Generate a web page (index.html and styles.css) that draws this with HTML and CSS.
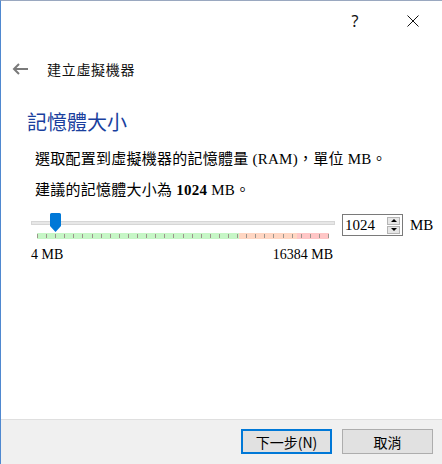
FILE: index.html
```html
<!DOCTYPE html>
<html lang="zh-Hant">
<head>
    <meta charset="UTF-8">
    <title>建立虛擬機器</title>
    <link rel="stylesheet" href="styles.css">
</head>
<body>
    <div class="window">
        <!-- Title bar -->
        <div class="titlebar">
            <span class="tb-btn">?</span>
            <span class="tb-btn">
                <svg width="12" height="12" viewBox="0 0 12 12"><path d="M0.5 0.5L11.5 11.5M11.5 0.5L0.5 11.5" stroke="#111" stroke-width="1" fill="none"/></svg>
            </span>
        </div>

        <!-- Wizard nav -->
        <div class="nav">
            <svg class="back" width="16" height="12" viewBox="0 0 16 12"><path d="M16 6H2M7 1L2 6l5 5" stroke="#7a7a7a" stroke-width="2" fill="none"/></svg>
            <span class="nav-title">建立虛擬機器</span>
        </div>

        <!-- Page -->
        <div class="page">
            <h1 class="page-title">記憶體大小</h1>
            <p class="desc">選取配置到虛擬機器的記憶體量 (RAM)，單位 MB。</p>
            <p class="desc">建議的記憶體大小為 <b>1024</b> MB。</p>

            <div class="mem-row">
                <div class="slider">
                    <div class="track"></div>
                    <svg class="thumb" width="11" height="19" viewBox="0 0 11 19"><path d="M1.5 0h8A1.5 1.5 0 0 1 11 1.5V13l-5.5 6L0 13V1.5A1.5 1.5 0 0 1 1.5 0z" fill="#0078d7"/></svg>
                    <div class="scale">
                        <i></i><i></i><i></i><i></i><i></i><i></i><i></i><i></i><i></i><i></i><i></i>
                        <i></i><i></i><i></i><i></i><i></i><i></i><i></i><i></i><i></i><i></i><i></i>
                        <i></i><i></i><i></i><i></i><i></i><i></i><i></i><i></i><i></i><i></i><i></i>
                    </div>
                </div>
                <div class="spin">
                    <span class="spin-value">1024</span>
                    <div class="spin-buttons">
                        <span class="spin-up"></span>
                        <span class="spin-down"></span>
                    </div>
                </div>
                <span class="unit">MB</span>
            </div>

            <div class="range-labels">
                <span>4 MB</span>
                <span>16384 MB</span>
            </div>
        </div>

        <!-- Buttons -->
        <div class="footer">
            <button class="btn btn-default">下一步(N)</button>
            <button class="btn">取消</button>
        </div>
    </div>
</body>
</html>
```

FILE: styles.css
```css
* {
    margin: 0;
    padding: 0;
    box-sizing: border-box;
}

body {
    font-family: "Liberation Serif", "Noto Sans CJK TC", serif;
    color: #000;
    background: #fff;
}

.window {
    height: 464px;
    display: flex;
    flex-direction: column;
    border-top: 1px solid #9aa8c0;
    border-left: 1px solid #4f88d0;
    background: #fff;
}

/* Title bar */
.titlebar {
    height: 40px;
    display: flex;
    justify-content: flex-end;
}

.tb-btn {
    width: 58px;
    display: flex;
    align-items: center;
    justify-content: center;
    font-family: "Noto Sans", sans-serif;
    font-size: 16px;
    color: #111;
}

/* Wizard nav */
.nav {
    height: 56px;
    display: flex;
    align-items: center;
    padding-left: 11px;
}

.back {
    margin-right: 19px;
}

.nav-title {
    font-family: "Noto Sans CJK TC", sans-serif;
    font-size: 14px;
    letter-spacing: 0.7px;
    color: #111;
}

/* Page */
.page {
    flex: 1;
}

.page-title {
    margin-top: 11px;
    padding-left: 26px;
    font-family: "Noto Sans CJK TC", sans-serif;
    font-size: 20px;
    font-weight: 400;
    line-height: 28px;
    color: #1a3f9e;
}

.desc {
    margin-top: 11px;
    padding-left: 34px;
    font-size: 15px;
    line-height: 20px;
    letter-spacing: 0.25px;
}

.page-title + .desc {
    margin-top: 13px;
}

.mem-row {
    display: flex;
    align-items: flex-start;
    margin-top: 13px;
    padding-left: 30px;
}

/* Slider */
.slider {
    position: relative;
    width: 304px;
    height: 26px;
}

.track {
    margin-top: 8px;
    height: 4px;
    background: #e7e7e7;
    border: 1px solid #d6d6d6;
}

.thumb {
    position: absolute;
    top: 0;
    left: 19px;
}

.scale {
    margin: 8px 0 0 6px;
    width: 292px;
    height: 6px;
    display: flex;
    justify-content: space-between;
    align-items: center;
    background: linear-gradient(to right, #c6f6c6 0, #c6f6c6 202px, #ffd6c2 202px, #ffd6c2 260px, #ffc6c6 260px);
}

.scale i {
    width: 1px;
    height: 4px;
    background: #9c948c;
}

/* Spin box */
.spin {
    display: flex;
    align-items: center;
    width: 61px;
    height: 22px;
    margin: 1px 0 0 7px;
    border: 1px solid #7a7a7a;
    background: #fff;
}

.spin-value {
    flex: 1;
    padding-left: 2px;
    font-size: 15px;
    line-height: 20px;
}

.spin-buttons {
    display: flex;
    flex-direction: column;
    gap: 1px;
    margin-right: 2px;
}

.spin-up,
.spin-down {
    width: 13px;
    height: 8px;
    display: flex;
    align-items: center;
    justify-content: center;
    background: #e6e6e6;
    border: 1px solid #b4b4b4;
}

.spin-up::after {
    content: "";
    border-left: 3px solid transparent;
    border-right: 3px solid transparent;
    border-bottom: 3px solid #000;
}

.spin-down::after {
    content: "";
    border-left: 3px solid transparent;
    border-right: 3px solid transparent;
    border-top: 3px solid #000;
}

.unit {
    margin: 1px 0 0 7px;
    font-size: 15px;
    line-height: 22px;
}

.range-labels {
    display: flex;
    justify-content: space-between;
    width: 302px;
    margin: 7px 0 0 30px;
    font-size: 14px;
    line-height: 18px;
}

/* Footer */
.footer {
    height: 45px;
    display: flex;
    justify-content: flex-end;
    gap: 10px;
    padding: 9px 9px 0 0;
    background: #f0f0f0;
    border-top: 1px solid #dfdfdf;
}

.btn {
    width: 91px;
    height: 25px;
    font-family: "Noto Sans CJK TC", sans-serif;
    font-size: 14px;
    color: #000;
    background: #e1e1e1;
    border: 1px solid #adadad;
}

.btn-default {
    border: 2px solid #0078d7;
}
```
